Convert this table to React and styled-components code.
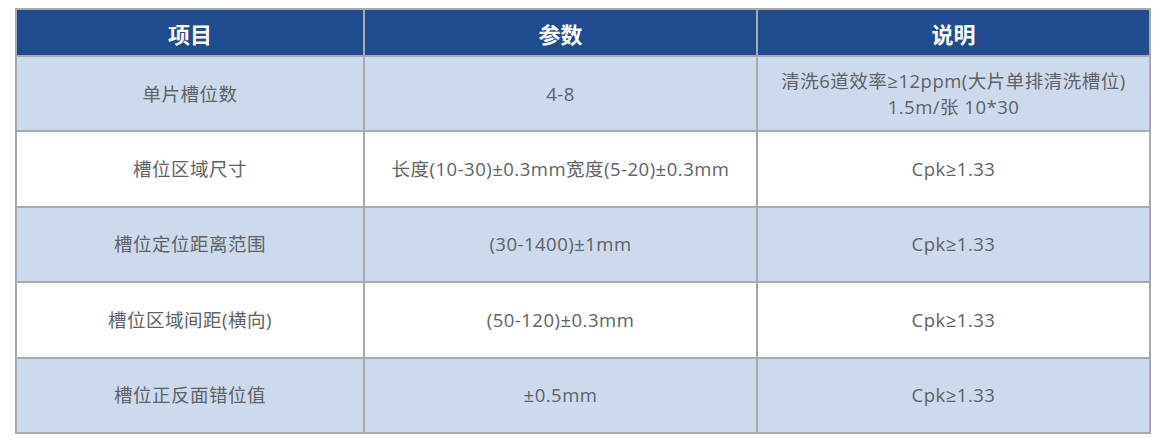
import styled, { createGlobalStyle } from 'styled-components'

const GlobalStyle = createGlobalStyle`
  body {
    margin: 0;
    background: #ffffff;
    font-family: "Open Sans", "Noto Sans CJK SC", sans-serif;
  }
`

const Page = styled.div`
  padding: 8px 0 0 15px;
`

const Table = styled.table`
  width: 1134px;
  border-collapse: collapse;
  table-layout: fixed;
  border: 2px solid #a8aaad;
`

const HeadCell = styled.th`
  height: 45px;
  padding: 0;
  background: #1e4c8f;
  color: #ffffff;
  font-family: "Noto Sans CJK SC", sans-serif;
  font-size: 22px;
  font-weight: 700;
  text-align: center;
  vertical-align: middle;
  border: 2px solid #a8aaad;
  border-top: none;
`

const Row = styled.tr`
  background: ${(props) => (props.shaded ? '#cdd9ec' : '#ffffff')};
`

const Cell = styled.td`
  height: 73.4px;
  padding: 0 8px;
  color: #606266;
  font-size: 18.5px;
  line-height: 26px;
  letter-spacing: 0.5px;
  text-align: center;
  vertical-align: middle;
  border: 2px solid #a8aaad;
`

const rows = [
  ['单片槽位数', '4-8', ['清洗6道效率≥12ppm(大片单排清洗槽位)', '1.5m/张 10*30']],
  ['槽位区域尺寸', '长度(10-30)±0.3mm宽度(5-20)±0.3mm', ['Cpk≥1.33']],
  ['槽位定位距离范围', '(30-1400)±1mm', ['Cpk≥1.33']],
  ['槽位区域间距(横向)', '(50-120)±0.3mm', ['Cpk≥1.33']],
  ['槽位正反面错位值', '±0.5mm', ['Cpk≥1.33']],
]

export default function App() {
  return (
    <>
      <GlobalStyle />
      <Page>
        <Table>
          <colgroup>
            <col style={{ width: '348px' }} />
            <col style={{ width: '393px' }} />
            <col style={{ width: '393px' }} />
          </colgroup>
          <thead>
            <tr>
              <HeadCell>项目</HeadCell>
              <HeadCell>参数</HeadCell>
              <HeadCell>说明</HeadCell>
            </tr>
          </thead>
          <tbody>
            {rows.map((r, i) => (
              <Row key={i} shaded={i % 2 === 0}>
                <Cell>{r[0]}</Cell>
                <Cell>{r[1]}</Cell>
                <Cell>
                  {r[2].map((line, j) => (
                    <div key={j}>{line}</div>
                  ))}
                </Cell>
              </Row>
            ))}
          </tbody>
        </Table>
      </Page>
    </>
  )
}
